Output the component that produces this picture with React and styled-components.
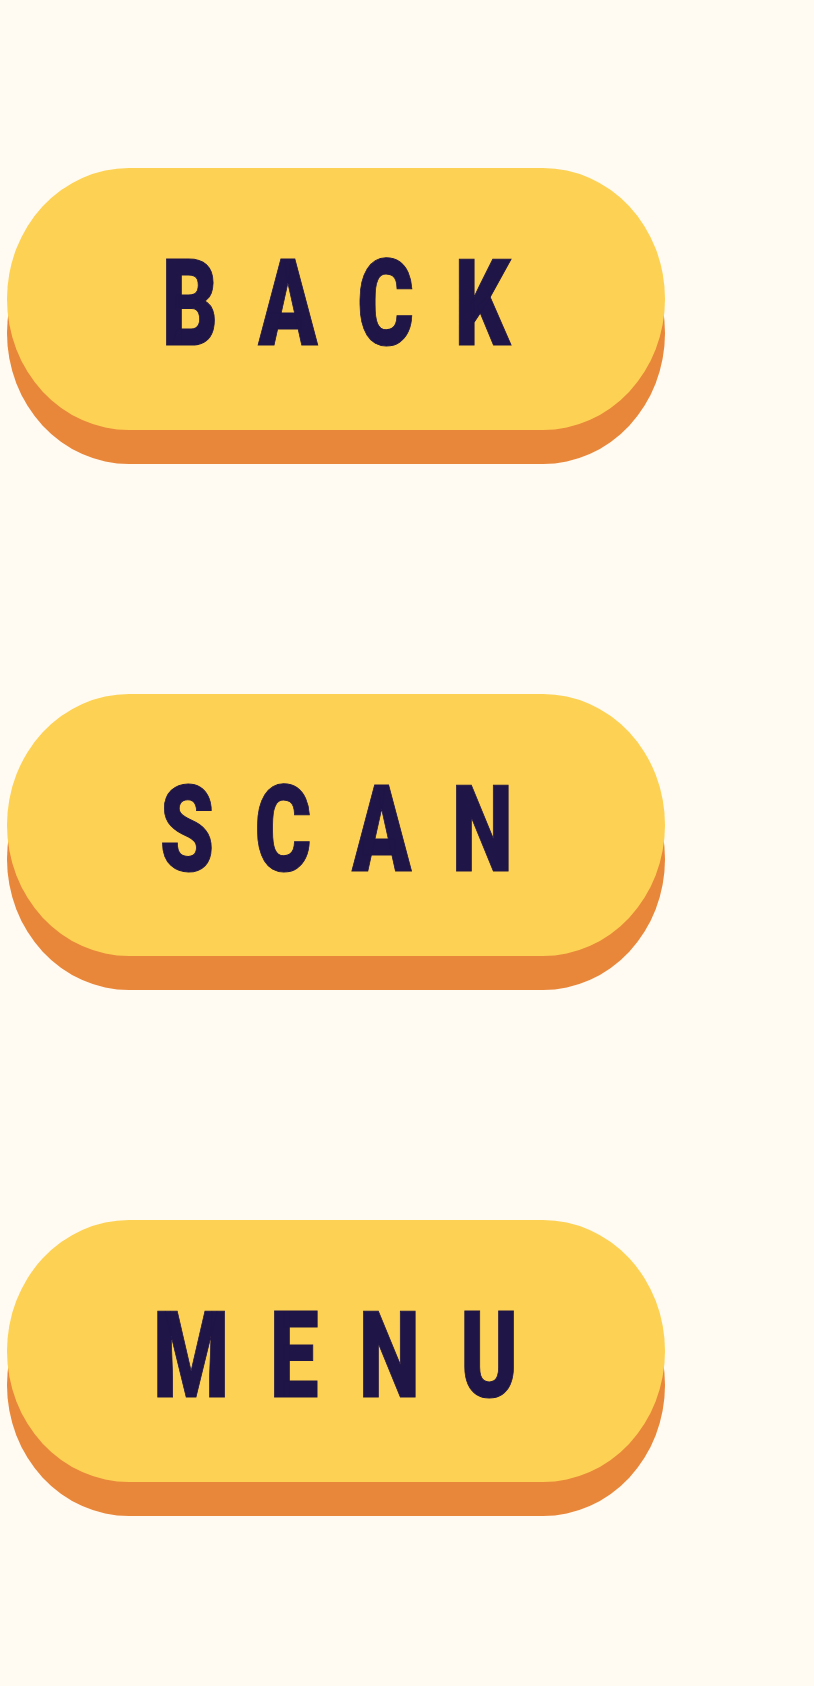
import React from "react";
import styled, { createGlobalStyle } from "styled-components";

const GlobalStyle = createGlobalStyle`
  html, body {
    margin: 0;
    padding: 0;
    background: #fffaf2;
  }
`;

const App = () => {
  return (
    <>
      <GlobalStyle />
      <Page>
        {["BACK", "SCAN", "MENU"].map((label) => (
          <PillButton key={label}>
            <Label>{label}</Label>
          </PillButton>
        ))}
      </Page>
    </>
  );
};

export default App;

// ======== Styled Components ========

const Page = styled.main`
  min-height: 1686px;
  box-sizing: border-box;
  padding: 168px 0 0 7px;
  display: flex;
  flex-direction: column;
  align-items: flex-start;
  gap: 264px;
  background: #fffaf2;
`;

const PillButton = styled.button`
  width: 658px;
  height: 262px;
  border: none;
  padding: 0;
  margin: 0;
  border-radius: 122px / 131px;
  background: #fdd154;
  box-shadow: 0 34px 0 #e8863a;
  display: flex;
  align-items: center;
  justify-content: center;
  cursor: pointer;
`;

// condensed look: Roboto squeezed horizontally
const Label = styled.span`
  display: inline-block;
  font-family: Roboto, "Liberation Sans", sans-serif;
  font-weight: 900;
  font-size: 121px;
  line-height: 1;
  color: #1f1547;
  -webkit-text-stroke: 1px #1f1547;
  letter-spacing: 56px;
  padding-left: 56px;
  margin-top: 10px;
  transform: scaleX(0.72);
`;
